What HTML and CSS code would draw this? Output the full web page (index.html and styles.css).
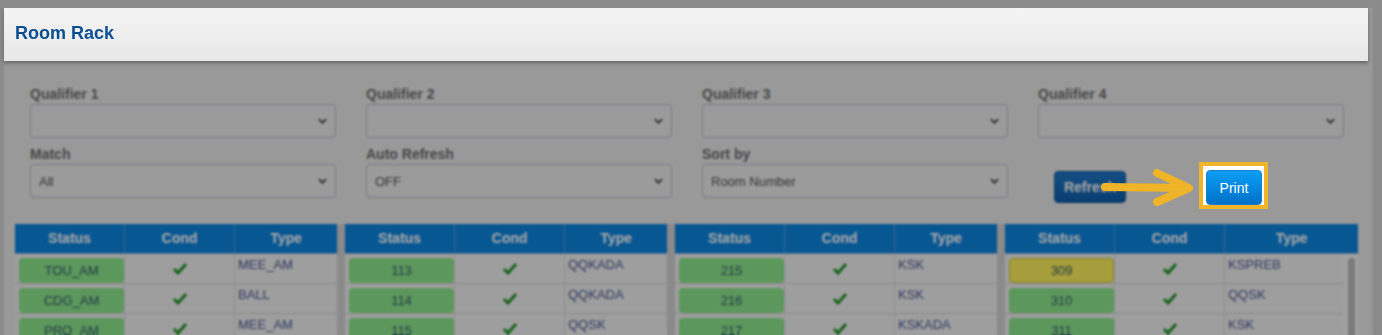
FILE: index.html
```html
<!DOCTYPE html>
<html lang="en">

<head>
    <meta charset="UTF-8">
    <meta name="viewport" content="width=device-width, initial-scale=1.0">
    <title>Room Rack</title>
    <link rel="stylesheet" href="styles.css">
</head>

<body>
    <div class="page">
        <div class="page-head lift">
            <h1>Room Rack</h1>
        </div>

        <div class="filters">
            <div class="field">
                <label>Qualifier 1</label>
                <div class="select"><span></span><svg class="chev" viewBox="0 0 10 6"><path d="M1 1 L5 5 L9 1" /></svg></div>
            </div>
            <div class="field">
                <label>Qualifier 2</label>
                <div class="select"><span></span><svg class="chev" viewBox="0 0 10 6"><path d="M1 1 L5 5 L9 1" /></svg></div>
            </div>
            <div class="field">
                <label>Qualifier 3</label>
                <div class="select"><span></span><svg class="chev" viewBox="0 0 10 6"><path d="M1 1 L5 5 L9 1" /></svg></div>
            </div>
            <div class="field">
                <label>Qualifier 4</label>
                <div class="select"><span></span><svg class="chev" viewBox="0 0 10 6"><path d="M1 1 L5 5 L9 1" /></svg></div>
            </div>
            <div class="field">
                <label>Match</label>
                <div class="select"><span>All</span><svg class="chev" viewBox="0 0 10 6"><path d="M1 1 L5 5 L9 1" /></svg></div>
            </div>
            <div class="field">
                <label>Auto Refresh</label>
                <div class="select"><span>OFF</span><svg class="chev" viewBox="0 0 10 6"><path d="M1 1 L5 5 L9 1" /></svg></div>
            </div>
            <div class="field">
                <label>Sort by</label>
                <div class="select"><span>Room Number</span><svg class="chev" viewBox="0 0 10 6"><path d="M1 1 L5 5 L9 1" /></svg></div>
            </div>
            <div class="actions">
                <button class="btn btn-refresh">Refresh</button>
                <div class="print-box lift">
                    <button class="btn btn-print">Print</button>
                </div>
                <svg class="arrow lift" viewBox="0 0 96 40" width="96" height="40">
                    <path d="M5 19 L86 20 M57 5 L89 20 L57 34" />
                </svg>
            </div>
        </div>

        <div class="racks">
            <div class="rack">
                <div class="rack-head"><div>Status</div><div>Cond</div><div>Type</div></div>
                <div class="rack-body">
                    <div class="rack-rows">
                        <div class="rack-row"><div class="st"><span class="pill">TOU_AM</span></div><div class="cond"><svg class="tick" viewBox="0 0 16 13"><path d="M2 7 L6 11 L14 2" /></svg></div><div class="type">MEE_AM</div></div>
                        <div class="rack-row"><div class="st"><span class="pill">CDG_AM</span></div><div class="cond"><svg class="tick" viewBox="0 0 16 13"><path d="M2 7 L6 11 L14 2" /></svg></div><div class="type">BALL</div></div>
                        <div class="rack-row"><div class="st"><span class="pill">PRO_AM</span></div><div class="cond"><svg class="tick" viewBox="0 0 16 13"><path d="M2 7 L6 11 L14 2" /></svg></div><div class="type">MEE_AM</div></div>
                    </div>
                </div>
            </div>
            <div class="rack">
                <div class="rack-head"><div>Status</div><div>Cond</div><div>Type</div></div>
                <div class="rack-body">
                    <div class="rack-rows">
                        <div class="rack-row"><div class="st"><span class="pill">113</span></div><div class="cond"><svg class="tick" viewBox="0 0 16 13"><path d="M2 7 L6 11 L14 2" /></svg></div><div class="type">QQKADA</div></div>
                        <div class="rack-row"><div class="st"><span class="pill">114</span></div><div class="cond"><svg class="tick" viewBox="0 0 16 13"><path d="M2 7 L6 11 L14 2" /></svg></div><div class="type">QQKADA</div></div>
                        <div class="rack-row"><div class="st"><span class="pill">115</span></div><div class="cond"><svg class="tick" viewBox="0 0 16 13"><path d="M2 7 L6 11 L14 2" /></svg></div><div class="type">QQSK</div></div>
                    </div>
                </div>
            </div>
            <div class="rack">
                <div class="rack-head"><div>Status</div><div>Cond</div><div>Type</div></div>
                <div class="rack-body">
                    <div class="rack-rows">
                        <div class="rack-row"><div class="st"><span class="pill">215</span></div><div class="cond"><svg class="tick" viewBox="0 0 16 13"><path d="M2 7 L6 11 L14 2" /></svg></div><div class="type">KSK</div></div>
                        <div class="rack-row"><div class="st"><span class="pill">216</span></div><div class="cond"><svg class="tick" viewBox="0 0 16 13"><path d="M2 7 L6 11 L14 2" /></svg></div><div class="type">KSK</div></div>
                        <div class="rack-row"><div class="st"><span class="pill">217</span></div><div class="cond"><svg class="tick" viewBox="0 0 16 13"><path d="M2 7 L6 11 L14 2" /></svg></div><div class="type">KSKADA</div></div>
                    </div>
                </div>
            </div>
            <div class="rack rack-last">
                <div class="rack-head"><div>Status</div><div>Cond</div><div>Type</div></div>
                <div class="rack-body">
                    <div class="rack-rows">
                        <div class="rack-row"><div class="st"><span class="pill pill-yellow">309</span></div><div class="cond"><svg class="tick" viewBox="0 0 16 13"><path d="M2 7 L6 11 L14 2" /></svg></div><div class="type">KSPREB</div></div>
                        <div class="rack-row"><div class="st"><span class="pill">310</span></div><div class="cond"><svg class="tick" viewBox="0 0 16 13"><path d="M2 7 L6 11 L14 2" /></svg></div><div class="type">QQSK</div></div>
                        <div class="rack-row"><div class="st"><span class="pill">311</span></div><div class="cond"><svg class="tick" viewBox="0 0 16 13"><path d="M2 7 L6 11 L14 2" /></svg></div><div class="type">KSK</div></div>
                    </div>
                    <div class="scroll"><div class="thumb"></div></div>
                </div>
            </div>
        </div>
    </div>

    <div class="dim"></div>
</body>

</html>
```

FILE: styles.css
```css
* {
    padding: 0;
    margin: 0;
    box-sizing: border-box;
}

html,
body {
    overflow: hidden;
}

body {
    background-color: #d6d6d6;
    font-family: "Liberation Sans", Arial, sans-serif;
    padding: 8px 8px 0 4px;
}

.page {
    background-color: #ececec;
    border-right: 1px solid #c9c9c9;
    min-height: 400px;
}

/* walkthrough highlight: these sit above the dim layer */
.lift {
    position: relative;
    z-index: 20;
}

.dim {
    position: fixed;
    inset: 0;
    background: rgba(0, 0, 0, 0.35);
    backdrop-filter: blur(1px);
    z-index: 10;
}

.page-head {
    height: 53px;
    margin-right: 5px;
    padding: 15px 11px 0;
    background: linear-gradient(#f4f4f4, #e8e8e8);
    box-shadow: 0 2px 4px rgba(0, 0, 0, 0.35);
}

.page-head h1 {
    font-size: 18px;
    line-height: 20px;
    color: #0b4f92;
}

.filters {
    display: grid;
    grid-template-columns: repeat(4, 306px);
    column-gap: 30px;
    row-gap: 9px;
    padding: 26px 0 0 26px;
}

.field label {
    display: block;
    font-size: 14px;
    line-height: 15px;
    font-weight: bold;
    color: #707070;
    margin-bottom: 2px;
}

.select {
    display: flex;
    justify-content: space-between;
    align-items: center;
    height: 34px;
    padding: 0 8px 0 8px;
    border: 1px solid #b7b8d2;
    border-radius: 4px;
    background-color: #efefef;
    font-size: 13px;
    color: #555;
}

.chev {
    width: 9px;
    height: 6px;
    fill: none;
    stroke: #444;
    stroke-width: 2;
}

.actions {
    position: relative;
    display: flex;
    align-items: flex-start;
    padding-top: 15px;
}

.btn {
    font-family: "Liberation Sans", Arial, sans-serif;
    font-size: 14px;
    color: white;
    border-radius: 4px;
}

.btn-refresh {
    margin: 9px 0 0 16px;
    width: 72px;
    height: 32px;
    border: 1px solid #0d5a9e;
    background: linear-gradient(#1f78c8, #0f5fae);
    font-weight: bold;
}

.print-box {
    margin-left: 73px;
    padding: 4px 2px 0 3px;
    border: 4px solid #efb428;
    background-color: #fff;
}

.btn-print {
    display: block;
    width: 56px;
    height: 35px;
    border: 1px solid #1a7fd0;
    background: linear-gradient(#0c9ef5, #0071c9);
}

.arrow {
    position: absolute;
    left: 62px;
    top: 21px;
    fill: none;
    stroke: #efb428;
    stroke-width: 8;
    stroke-linecap: round;
    stroke-linejoin: round;
}

.racks {
    display: flex;
    gap: 8px;
    margin: 15px 0 0 11px;
    width: 1343px;
    background-color: #d4d4d4;
}

.rack {
    width: 322px;
    background-color: #f3f3f3;
}

.rack-last {
    width: 353px;
}

.rack-head {
    display: grid;
    grid-template-columns: 110px 110px 1fr;
    height: 30px;
    background-color: #0b86e2;
    border-bottom: 1px solid #8ab8e0;
}

.rack-head div {
    border-right: 1px solid #5da4e0;
    color: white;
    font-size: 14px;
    font-weight: bold;
    text-align: center;
    line-height: 29px;
}

.rack-head div:last-child {
    border-right: none;
}

.rack-body {
    display: flex;
}

.rack-rows {
    flex: 1;
}

.rack-row {
    display: grid;
    grid-template-columns: 110px 110px 1fr;
    height: 30px;
    border-bottom: 1px solid #d3d3d3;
}

.st {
    padding: 4px 0 0 4px;
    border-right: 1px solid #dcdcdc;
}

.pill {
    display: block;
    height: 25px;
    border-radius: 4px;
    background-color: #8ee88e;
    color: #3a6670;
    font-size: 13px;
    line-height: 25px;
    text-align: center;
}

.pill-yellow {
    background-color: #fff25c;
    border: 1px solid #d8cc40;
    line-height: 23px;
}

.cond {
    display: flex;
    justify-content: center;
    padding-top: 8px;
    border-right: 1px solid #dcdcdc;
}

.tick {
    width: 16px;
    height: 13px;
    fill: none;
    stroke: #23982a;
    stroke-width: 3;
}

.type {
    padding: 3px 3px;
    font-size: 13px;
    color: #4f5f98;
}

.scroll {
    width: 15px;
    padding: 4px 3px 0 5px;
    background-color: #f6f6f6;
}

.thumb {
    height: 120px;
    border-radius: 4px;
    background-color: #bdbdbd;
}
```
